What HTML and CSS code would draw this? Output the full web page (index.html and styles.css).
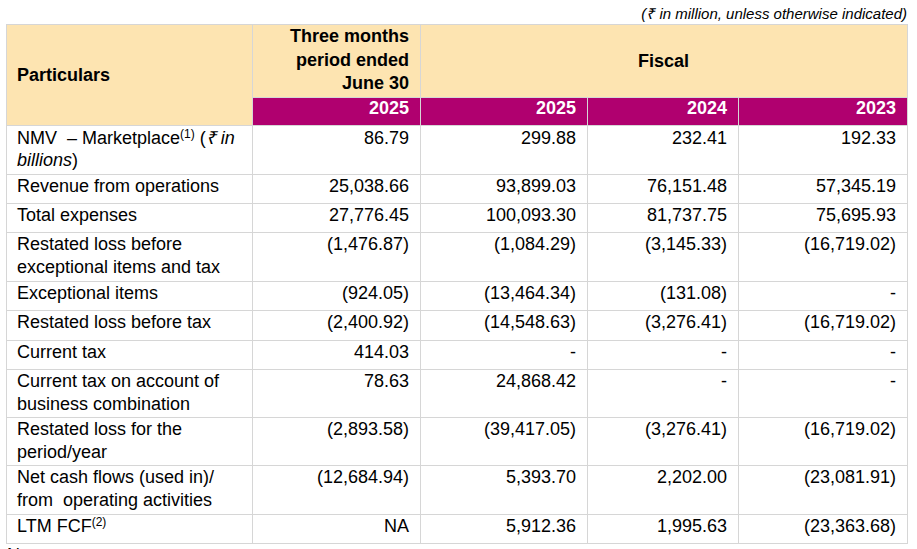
FILE: index.html
```html
<!DOCTYPE html>
<html>
<head>
<meta charset="utf-8">
<link rel="stylesheet" href="styles.css">
</head>
<body>
<div class="unit-note">(₹ in million, unless otherwise indicated)</div>
<table class="fin">
  <colgroup>
    <col class="c-part">
    <col class="c-q">
    <col class="c-f25">
    <col class="c-f24">
    <col class="c-f23">
  </colgroup>
  <thead>
    <tr class="h-top">
      <th class="part" rowspan="2">Particulars</th>
      <th class="period">Three months<br>period ended<br>June 30</th>
      <th class="fiscal" colspan="3">Fiscal</th>
    </tr>
    <tr class="h-year">
      <th class="yr">2025</th>
      <th class="yr">2025</th>
      <th class="yr">2024</th>
      <th class="yr">2023</th>
    </tr>
  </thead>
  <tbody>
    <tr class="h49 first">
      <td>NMV &nbsp;– Marketplace<sup>(1)</sup> (<i>₹ in billions</i>)</td>
      <td class="num">86.79</td><td class="num">299.88</td><td class="num">232.41</td><td class="num">192.33</td>
    </tr>
    <tr class="h29">
      <td>Revenue from operations</td>
      <td class="num">25,038.66</td><td class="num">93,899.03</td><td class="num">76,151.48</td><td class="num">57,345.19</td>
    </tr>
    <tr class="h29">
      <td>Total expenses</td>
      <td class="num">27,776.45</td><td class="num">100,093.30</td><td class="num">81,737.75</td><td class="num">75,695.93</td>
    </tr>
    <tr class="h49">
      <td>Restated loss before exceptional items and tax</td>
      <td class="num">(1,476.87)</td><td class="num">(1,084.29)</td><td class="num">(3,145.33)</td><td class="num">(16,719.02)</td>
    </tr>
    <tr class="h29">
      <td>Exceptional items</td>
      <td class="num">(924.05)</td><td class="num">(13,464.34)</td><td class="num">(131.08)</td><td class="num">-</td>
    </tr>
    <tr class="h30">
      <td>Restated loss before tax</td>
      <td class="num">(2,400.92)</td><td class="num">(14,548.63)</td><td class="num">(3,276.41)</td><td class="num">(16,719.02)</td>
    </tr>
    <tr class="h29">
      <td>Current tax</td>
      <td class="num">414.03</td><td class="num">-</td><td class="num">-</td><td class="num">-</td>
    </tr>
    <tr class="h48">
      <td>Current tax on account of business combination</td>
      <td class="num">78.63</td><td class="num">24,868.42</td><td class="num">-</td><td class="num">-</td>
    </tr>
    <tr class="h48">
      <td>Restated loss for the period/year</td>
      <td class="num">(2,893.58)</td><td class="num">(39,417.05)</td><td class="num">(3,276.41)</td><td class="num">(16,719.02)</td>
    </tr>
    <tr class="h49">
      <td>Net cash flows (used in)/ from &nbsp;operating activities</td>
      <td class="num">(12,684.94)</td><td class="num">5,393.70</td><td class="num">2,202.00</td><td class="num">(23,081.91)</td>
    </tr>
    <tr class="h29">
      <td>LTM FCF<sup>(2)</sup></td>
      <td class="num">NA</td><td class="num">5,912.36</td><td class="num">1,995.63</td><td class="num">(23,363.68)</td>
    </tr>
  </tbody>
</table>
<div class="notes">Notes:</div>
</body>
</html>
```

FILE: styles.css
```css
html, body {
  margin: 0;
  padding: 0;
  background: #ffffff;
}

body {
  font-family: "Liberation Sans", Arial, sans-serif;
  color: #000000;
  width: 917px;
  height: 549px;
  overflow: hidden;
}

.unit-note {
  height: 24px;
  box-sizing: border-box;
  padding: 5px 10px 0 0;
  text-align: right;
  font-style: italic;
  font-size: 15px;
  line-height: 17px;
}

.fin {
  margin-left: 6px;
  width: 901px;
  border-collapse: collapse;
  table-layout: fixed;
  font-size: 18px;
  line-height: 23px;
}

.c-part { width: 246px; }
.c-q { width: 168px; }
.c-f25 { width: 167px; }
.c-f24 { width: 151px; }
.c-f23 { width: 169px; }

.fin th,
.fin td {
  border: 1px solid #d6d6d6;
  padding: 0 11px 0 10px;
  vertical-align: top;
}

.fin th {
  font-weight: bold;
}

.h-top { height: 73px; }
.h-year { height: 28px; }

.part {
  background: #fde4b1;
  text-align: left;
  vertical-align: middle !important;
}

.period {
  background: #fde4b1;
  text-align: right;
  line-height: 23.5px;
}

.fiscal {
  background: #fde4b1;
  text-align: center;
  vertical-align: middle !important;
}

.yr {
  background: #b0006f;
  color: #ffffff;
  text-align: right;
  line-height: 20px;
}

.num {
  text-align: right;
}

.first td {
  padding-top: 2px;
  line-height: 21.5px;
}

.h29 { height: 29px; }
.h30 { height: 30px; }
.h48 { height: 48px; }
.h49 { height: 49px; }

sup {
  font-size: 12px;
  line-height: 0;
  vertical-align: 6px;
}

.notes {
  margin-left: 7px;
  font-size: 18px;
  line-height: 23px;
}
```
